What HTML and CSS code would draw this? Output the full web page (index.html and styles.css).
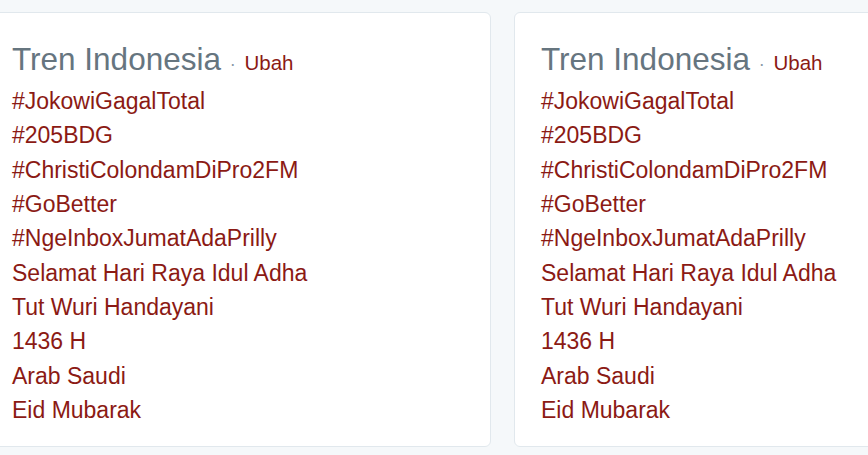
FILE: index.html
```html
<!DOCTYPE html>
<html>
<head>
<meta charset="utf-8">
<link rel="stylesheet" href="styles.css">
</head>
<body>
<div class="row">
  <div class="card">
    <h2 class="title">Tren Indonesia <span class="dot">·</span> <a class="change">Ubah</a></h2>
    <ul class="trends">
      <li>#JokowiGagalTotal</li>
      <li>#205BDG</li>
      <li>#ChristiColondamDiPro2FM</li>
      <li>#GoBetter</li>
      <li>#NgeInboxJumatAdaPrilly</li>
      <li>Selamat Hari Raya Idul Adha</li>
      <li>Tut Wuri Handayani</li>
      <li>1436 H</li>
      <li>Arab Saudi</li>
      <li>Eid Mubarak</li>
    </ul>
  </div>
  <div class="card">
    <h2 class="title">Tren Indonesia <span class="dot">·</span> <a class="change">Ubah</a></h2>
    <ul class="trends">
      <li>#JokowiGagalTotal</li>
      <li>#205BDG</li>
      <li>#ChristiColondamDiPro2FM</li>
      <li>#GoBetter</li>
      <li>#NgeInboxJumatAdaPrilly</li>
      <li>Selamat Hari Raya Idul Adha</li>
      <li>Tut Wuri Handayani</li>
      <li>1436 H</li>
      <li>Arab Saudi</li>
      <li>Eid Mubarak</li>
    </ul>
  </div>
</div>
</body>
</html>
```
FILE: styles.css
```css
html, body {
  margin: 0;
  padding: 0;
  background: #f5f8fa;
  overflow: hidden;
}
body {
  font-family: "Liberation Sans", Arial, sans-serif;
}
.row {
  display: flex;
  gap: 23px;
  margin-left: -15px;
  padding-top: 12px;
  width: 1100px;
}
.card {
  flex: 0 0 506px;
  box-sizing: border-box;
  background: #fff;
  border: 1px solid #e1e8ed;
  border-radius: 6px;
  padding: 28px 26px 17px 26px;
  height: 435px;
}
.title {
  margin: 0;
  font-weight: normal;
  font-size: 31.5px;
  line-height: 37px;
  color: #66757f;
  white-space: nowrap;
}
.dot {
  font-size: 18px;
  color: #8899a6;
}
.change {
  font-size: 20.5px;
  color: #8b1a14;
}
.trends {
  list-style: none;
  margin: 1px 0 0 0;
  padding: 0;
}
.trends li {
  font-size: 23px;
  line-height: 34.33px;
  color: #8b1a14;
  white-space: nowrap;
}
```
